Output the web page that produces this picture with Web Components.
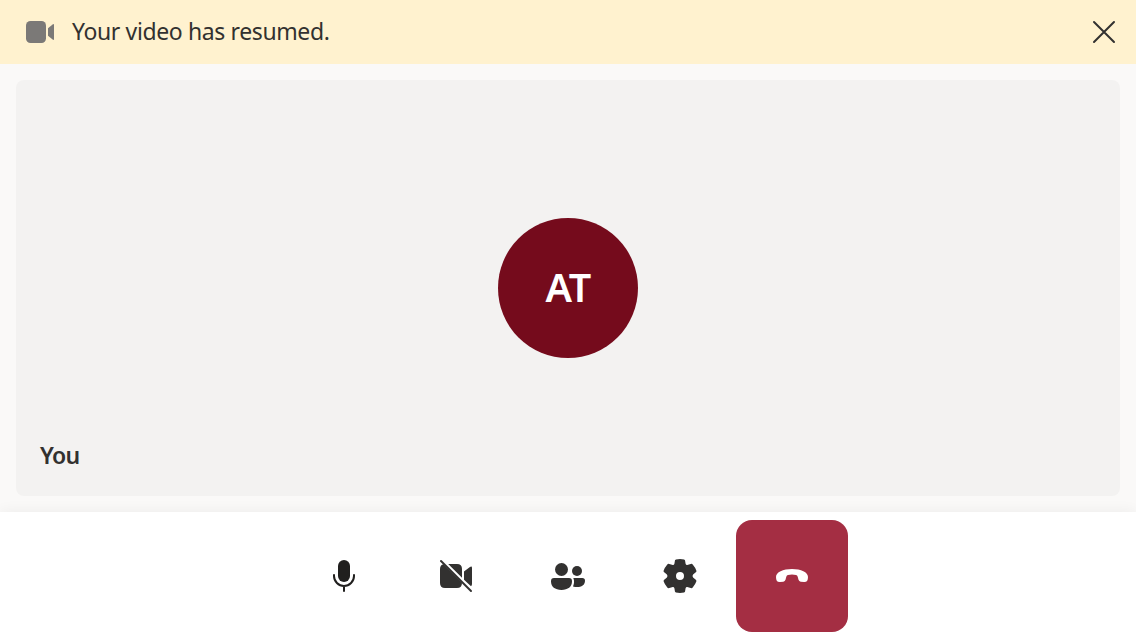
<!DOCTYPE html>
<html lang="en"><head><meta charset="utf-8"><title>Call</title>
<style>html,body{margin:0;height:100%;overflow:hidden}body{font-family:"Noto Sans","Open Sans",sans-serif;color:#323130}</style></head>
<body><call-screen></call-screen>
<script>
const define=(name,html)=>customElements.define(name,class extends HTMLElement{
  constructor(){super();const t=document.createElement('template');t.innerHTML=html;this.attachShadow({mode:'open'}).append(t.content.cloneNode(true));}
});
define('notice-bar',`<style>
:host{display:flex;align-items:center;height:64px;background:#fff2cf;padding:0 20px 0 24px;box-sizing:border-box}
svg{display:block;flex:none}.msg{flex:1;margin-left:16px;font-size:23px;line-height:32px;padding-bottom:2px;letter-spacing:-.38px;white-space:nowrap}
</style>
<svg width="32" height="32" fill="#7b7977"><rect x="2" y="5" width="20" height="22" rx="4.5"/><path d="M24 12.2 28.6 8.4Q30 7.3 30 9V23Q30 24.7 28.6 23.6L24 19.8Z"/></svg>
<span class="msg"><slot></slot></span>
<svg width="24" height="24" fill="none" stroke="#323130" stroke-width="2" stroke-linecap="round"><path d="M2 2 22 22M22 2 2 22"/></svg>`);
define('user-avatar',`<style>
:host{display:flex;align-items:center;justify-content:center;width:140px;height:140px;border-radius:50%;background:#750b1c;color:#fff;font-size:39.5px;line-height:52px;font-weight:600;letter-spacing:-.6px}
span{padding-bottom:2px}
</style><span><slot></slot></span>`);
define('video-tile',`<style>
:host{display:grid;grid-template:1fr/1fr;border-radius:8px;background:#f3f2f1}
::slotted(user-avatar){grid-area:1/1;place-self:center}
.name{grid-area:1/1;align-self:end;justify-self:start;margin:0 0 25px 24px;font-size:23px;line-height:32px;font-weight:600;letter-spacing:-.7px}
</style><slot></slot><span class="name"><slot name="label"></slot></span>`);
define('call-button',`<style>
:host{display:flex;align-items:center;justify-content:center;width:112px;height:112px;border-radius:16px;color:#323130}
:host([danger]){background:#a42e43;color:#fff}
::slotted(svg){display:block;fill:currentColor}
</style><slot></slot>`);
define('control-bar',`<style>
:host{display:flex;justify-content:center;align-items:center;height:128px;background:#fff;box-shadow:0 0 14px rgba(0,0,0,.06);position:relative}
</style>
<call-button><svg width="40" height="40"><rect x="14" y="4" width="12" height="22" rx="6" fill="#201f1e"/><path d="M10 19V20A10 10 0 0 0 30 20V19M20 30V35" fill="none" stroke="#201f1e" stroke-width="2" stroke-linecap="round"/></svg></call-button>
<call-button><svg width="40" height="40"><path d="M7.5 8.3 26 26.8Q26 32 21 32H9Q4 32 4 27V13Q4 9 7.5 8.3ZM12.2 8H21Q26 8 26 13V21.8ZM28 15.5 33.6 11.3Q36 9.5 36 12V28Q36 29.4 35 30.2L28 23.8Z"/><path d="M5 5 35 35" fill="none" stroke="#323130" stroke-width="2" stroke-linecap="round"/></svg></call-button>
<call-button><svg width="40" height="40"><circle cx="13.5" cy="13.5" r="6.5"/><circle cx="29" cy="15" r="5"/><path d="M6 22H21Q24 22 24 25.3C24 30.7 20 34 13.5 34S3 30.7 3 25.3Q3 22 6 22ZM25.3 22H34.3Q37 22 37 24.7C37 29 33.5 31 29 31Q27 31 25 30.4 27 26 25.3 22Z"/></svg></call-button>
<call-button><svg width="40" height="40"><path fill-rule="evenodd" d="M15.9 3.4Q20 2.5 24.1 3.4L25 4.2 25.6 7.8Q25.9 9.2 27.2 9.1L30.7 7.9Q32 7.6 32.7 8.4 35.3 11.4 36.4 14.7 36.6 15.7 35.8 16.3L33.1 18.5Q31.9 20 33.1 21.5L35.8 23.7Q36.6 24.3 36.4 25.3 35.3 28.6 32.7 31.6 32 32.4 30.7 32.1L27.2 30.9Q25.9 30.8 25.6 32.2L25 35.8 24.1 36.6Q20 37.5 15.9 36.6L15 35.8 14.4 32.2Q14.1 30.8 12.8 30.9L9.3 32.1Q8 32.4 7.3 31.6 4.7 28.6 3.6 25.3 3.4 24.3 4.2 23.7L6.9 21.5Q8.1 20 6.9 18.5L4.2 16.3Q3.4 15.7 3.6 14.7 4.7 11.4 7.3 8.4 8 7.6 9.3 7.9L12.8 9.1Q14.1 9.2 14.4 7.8L15 4.2ZM20 16A4 4 0 1 0 20 24A4 4 0 0 0 20 16Z"/></svg></call-button>
<call-button danger><svg width="40" height="40"><path d="M20 13C29 13 36 16.2 36 21C36 24.8 34.6 26.3 32 26.1L28.7 25.7Q27 25.4 26.5 23.7L25.7 20.7Q25.3 19.4 24 19 20 18 16 19 14.7 19.4 14.3 20.7L13.5 23.7Q13 25.4 11.3 25.7L8 26.1C5.4 26.3 4 24.8 4 21C4 16.2 11 13 20 13Z"/></svg></call-button>`);
define('call-screen',`<style>
:host{display:flex;flex-direction:column;height:100vh;background:#faf9f8}
main{flex:1;display:grid;padding:16px}
</style><notice-bar>Your video has resumed.</notice-bar>
<main><video-tile><user-avatar>AT</user-avatar><span slot="label">You</span></video-tile></main>
<control-bar></control-bar>`);
</script></body></html>
